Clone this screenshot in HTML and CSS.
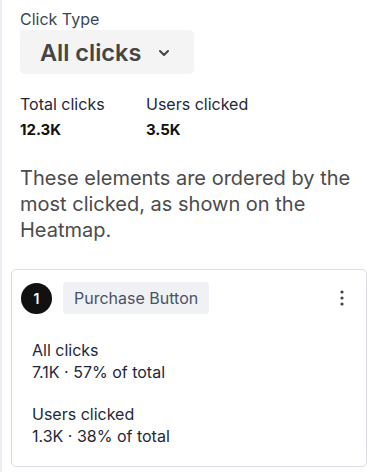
FILE: index.html
```html
<!DOCTYPE html>
<html>
<head>
<meta charset="utf-8">
<link rel="stylesheet" href="styles.css">
</head>
<body>
<div class="panel">
  <div class="field-label">Click Type</div>
  <button class="select">
    <span class="select-text">All clicks</span>
    <svg class="chev" width="12" height="8" viewBox="0 0 12 8"><path d="M2 2l4 4 4-4" fill="none" stroke="#444" stroke-width="2" stroke-linecap="round" stroke-linejoin="round"/></svg>
  </button>
  <div class="stats">
    <div class="stat">
      <div class="stat-label">Total clicks</div>
      <div class="stat-value">12.3K</div>
    </div>
    <div class="stat">
      <div class="stat-label">Users clicked</div>
      <div class="stat-value">3.5K</div>
    </div>
  </div>
  <p class="desc">These elements are ordered by the most clicked, as shown on the Heatmap.</p>
  <div class="card">
    <div class="card-head">
      <span class="rank">1</span>
      <span class="chip">Purchase Button</span>
      <svg class="kebab" width="4" height="16" viewBox="0 0 4 16"><circle cx="2" cy="2" r="1.6" fill="#444"/><circle cx="2" cy="8" r="1.6" fill="#444"/><circle cx="2" cy="14" r="1.6" fill="#444"/></svg>
    </div>
    <div class="metric">
      <div>All clicks</div>
      <div>7.1K · 57% of total</div>
    </div>
    <div class="metric">
      <div>Users clicked</div>
      <div>1.3K · 38% of total</div>
    </div>
  </div>
</div>
</body>
</html>
```
FILE: styles.css
```css
* { box-sizing: border-box; }
html, body { margin: 0; padding: 0; background: #fff; }
body { font-family: Inter, "Noto Sans", sans-serif; width: 375px; height: 472px; overflow: hidden; }
.panel {
  border-left: 2px solid #ececf3;
  height: 472px;
  padding: 8px 8px 0 9px;
}
.field-label {
  margin-left: 9px;
  font-size: 16px;
  line-height: 22px;
  color: #3b4656;
}
.select {
  margin: 0 0 0 9px;
  width: 174px;
  height: 44px;
  border: none;
  border-radius: 5px;
  background: #f4f4f4;
  display: flex;
  align-items: center;
  padding: 0 0 0 20px;
  font-family: inherit;
  cursor: pointer;
}
.select-text {
  font-size: 23.5px;
  font-weight: 600;
  color: #454545;
}
.chev { margin-left: 17px; margin-top: 2px; }
.stats {
  display: flex;
  margin: 20px 0 0 9px;
}
.stat { width: 126px; }
.stat-label { font-size: 16px; line-height: 20px; color: #1e2838; }
.stat-value { font-size: 15px; line-height: 20px; font-weight: 700; color: #111; margin-top: 6px; }
.desc {
  margin: 25px 0 0 9px;
  font-size: 20px;
  line-height: 26px;
  color: #4b4b4b;
}
.card {
  margin-top: 26px;
  border: 1px solid #dcdce4;
  border-radius: 5px;
  height: 198px;
  padding: 12px 12px 0 9px;
}
.card-head {
  display: flex;
  align-items: center;
}
.rank {
  width: 31px; height: 31px; border-radius: 50%;
  background: #111; color: #fff;
  font-size: 14px; font-weight: 600;
  display: flex; align-items: center; justify-content: center;
  flex: none;
}
.chip {
  margin-left: 11px;
  background: #f0f1f4;
  border-radius: 4px;
  height: 32px;
  padding: 0 11px;
  display: flex; align-items: center;
  font-size: 16px;
  color: #4a5262;
}
.kebab { margin-left: auto; margin-right: 10px; }
.metric {
  margin: 25px 0 0 11px;
  font-size: 16px;
  line-height: 22px;
  color: #1e2838;
}
.metric + .metric { margin-top: 20px; }
```
